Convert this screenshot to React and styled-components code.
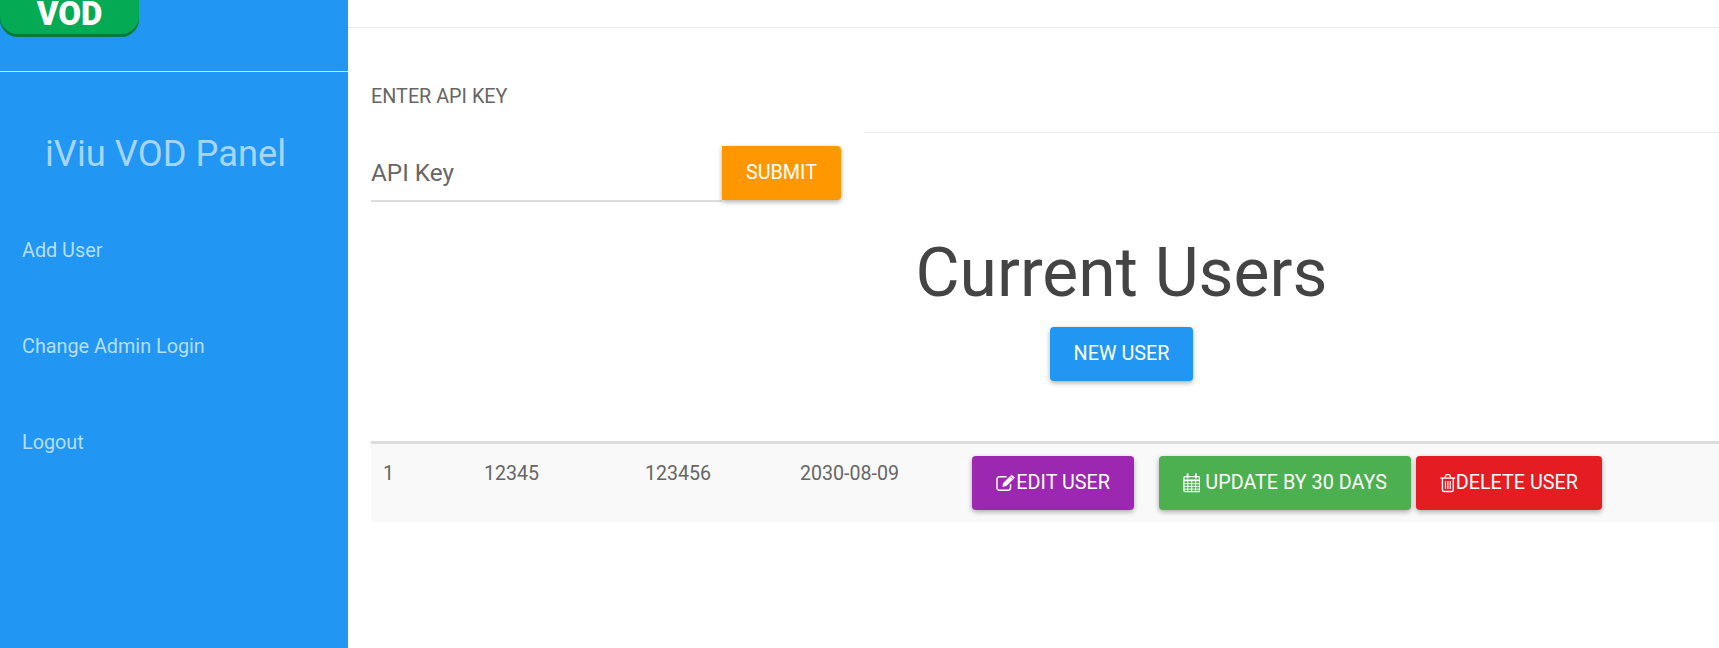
import styled, { createGlobalStyle } from 'styled-components';

const users = [{ id: 1, username: '12345', password: '123456', expires: '2030-08-09' }];
const links = ['Add User', 'Change Admin Login', 'Logout'];

// font-awesome 4 outline glyphs, the icon packages only carry the heavier v5 ones
const EditIcon = () => (
  <svg width="21" height="18" viewBox="0 0 21 18" fill="none" stroke="currentColor">
    <path d="M11 2.5H3.5a2.5 2.5 0 0 0-2.5 2.5v9a2.5 2.5 0 0 0 2.5 2.5h9a2.5 2.5 0 0 0 2.5-2.5v-4" strokeWidth="1.5" />
    <path d="M7 12.5l.8-3.6 8.4-8.2 2.9 2.9-8.4 8.2z" fill="currentColor" strokeWidth="0.6" />
    <path d="M14.8 2.4l2.8 2.8" stroke="#9c27b0" strokeWidth="0.8" />
  </svg>
);

const CalendarIcon = () => (
  <svg width="20" height="22" viewBox="0 0 19 21" fill="none" stroke="currentColor" strokeWidth="1.2">
    <rect x="1" y="3.5" width="17" height="16.5" rx="1.2" strokeWidth="1.4" />
    <path d="M1 7.6h17" strokeWidth="2" />
    <path d="M1 11.2h17M1 14.2h17M1 17.2h17M5.2 8v12M9.5 8v12M13.8 8v12" strokeWidth="1" />
    <path d="M5 .8v4M14 .8v4" strokeWidth="2" strokeLinecap="round" />
  </svg>
);

const TrashIcon = () => (
  <svg width="17" height="20" viewBox="0 0 16 19" fill="none" stroke="currentColor">
    <path d="M.5 4.5h15" strokeWidth="1.4" />
    <path d="M5 4.2l1-2.6a1 1 0 0 1 1-.6h2a1 1 0 0 1 1 .6l1 2.6" strokeWidth="1.3" />
    <path d="M2.5 4.5v12a1.7 1.7 0 0 0 1.7 1.7h7.6a1.7 1.7 0 0 0 1.7-1.7v-12" strokeWidth="1.4" />
    <path d="M5.6 7.5v8M8 7.5v8M10.4 7.5v8" strokeWidth="1.2" />
  </svg>
);

function App() {
  return (
    <>
      <GlobalStyle />
      <Page>
        <Sidebar>
          <LogoArea>
            <VodBadge>VOD</VodBadge>
          </LogoArea>
          <PanelTitle>iViu VOD Panel</PanelTitle>
          <Nav>
            {links.map((link) => (
              <NavLink key={link} href="#">
                {link}
              </NavLink>
            ))}
          </Nav>
        </Sidebar>

        <Main>
          <TopBar />
          <Content>
            <KeySection>
              <KeyColumn>
                <KeyLabel>ENTER API KEY</KeyLabel>
                <KeyForm>
                  <KeyInput placeholder="API Key" />
                  <SubmitButton>SUBMIT</SubmitButton>
                </KeyForm>
              </KeyColumn>
              <Divider />
            </KeySection>
            <UsersHeader>
              <Heading>Current Users</Heading>
              <Button $color="#2196f3">NEW USER</Button>
            </UsersHeader>
            <UserTable>
              {users.map((user) => (
                <UserRow key={user.id}>
                  <IdCell>{user.id}</IdCell>
                  <NameCell>{user.username}</NameCell>
                  <PassCell>{user.password}</PassCell>
                  <DateCell>{user.expires}</DateCell>
                  <Actions>
                    <Button $color="#9c27b0" $width={162}>
                      <EditIcon />
                      EDIT USER
                    </Button>
                    <UpdateButton $color="#4caf50" $width={252}>
                      <CalendarIcon />
                      &nbsp;UPDATE BY 30 DAYS
                    </UpdateButton>
                    <Button $color="#e61c23" $width={186}>
                      <TrashIcon />
                      DELETE USER
                    </Button>
                  </Actions>
                </UserRow>
              ))}
            </UserTable>
          </Content>
        </Main>
      </Page>
    </>
  );
}

const GlobalStyle = createGlobalStyle`
  html, body {
    margin: 0;
    height: 100%;
    overflow: hidden;
  }

  body {
    font-family: Roboto, "Liberation Sans", sans-serif;
    background-color: #fff;
    color: #666;
  }
`;

const Page = styled.div`
  display: flex;
  width: 1719px;
  height: 648px;
  overflow: hidden;
`;

const Sidebar = styled.aside`
  flex: 0 0 348px;
  background-color: #2196f3;
`;

const LogoArea = styled.div`
  height: 71px;
  border-bottom: 1px solid rgba(255, 255, 255, 0.75);
`;

const VodBadge = styled.div`
  display: flex;
  justify-content: center;
  align-items: flex-end;
  width: 139px;
  height: 36.5px;
  box-sizing: border-box;
  padding-bottom: 7px;
  border-radius: 0 0 18px 18px;
  background-color: #04aa54;
  box-shadow: inset 0 -3px 0 #067a3e;
  color: #fff;
  font-size: 33px;
  font-weight: 900;
  line-height: 33px;
`;

const PanelTitle = styled.h2`
  margin: 60px 0 0;
  padding-left: 45px;
  color: #a6d5fa;
  font-size: 36.3px;
  font-weight: 400;
  line-height: 44px;
`;

const Nav = styled.nav`
  display: flex;
  flex-direction: column;
  gap: 72px;
  margin-top: 63px;
  padding-left: 22px;
`;

const NavLink = styled.a`
  color: #b7defb;
  font-size: 19.8px;
  line-height: 24px;
  text-decoration: none;
`;

const Main = styled.main`
  flex: 1;
  min-width: 0;
`;

const TopBar = styled.div`
  height: 27px;
  border-bottom: 1px solid #eee;
`;

const Content = styled.div`
  padding: 57px 0 0 23px;
`;

const KeySection = styled.div`
  display: flex;
  align-items: flex-start;
  gap: 23px;
`;

const KeyColumn = styled.div`
  flex: 0 0 470px;
`;

const KeyLabel = styled.div`
  font-size: 19.8px;
  line-height: 24px;
`;

const KeyForm = styled.div`
  display: flex;
  align-items: flex-start;
  margin-top: 37px;
`;

const KeyInput = styled.input`
  flex: 1;
  min-width: 0;
  height: 56px;
  box-sizing: border-box;
  padding: 0 0 2px;
  border: none;
  border-bottom: 2px solid #ddd;
  outline: none;
  background: none;
  font-family: inherit;
  font-size: 24.3px;
  color: #666;

  &::placeholder {
    color: #666;
    opacity: 1;
  }
`;

const Button = styled.button`
  display: inline-flex;
  justify-content: center;
  align-items: center;
  height: 54px;
  width: ${(props) => (props.$width ? `${props.$width}px` : 'auto')};
  padding: 0 24px 1px;
  border: none;
  border-radius: 4px;
  background-color: ${(props) => props.$color};
  box-shadow: 0 2px 5px rgba(0, 0, 0, 0.32);
  color: #fff;
  font-family: inherit;
  font-size: 19.8px;
  white-space: nowrap;
`;

const SubmitButton = styled(Button)`
  width: 119px;
  padding: 0 0 1px;
  border-radius: 0 4px 4px 0;
  background-color: #ff9800;
`;

const UpdateButton = styled(Button)`
  margin-left: 25px;
  margin-right: 5px;
`;

const Divider = styled.div`
  flex: 1;
  margin-top: 47px;
  border-top: 1px solid #eee;
`;

const UsersHeader = styled.div`
  display: flex;
  flex-direction: column;
  align-items: center;
  gap: 12px;
  padding: 29px 0 0 153px;
`;

const Heading = styled.h1`
  margin: 0;
  color: #444;
  font-size: 67.8px;
  font-weight: 400;
  line-height: 84px;
`;

const UserTable = styled.div`
  margin-top: 60px;
  border-top: 3px solid #ddd;
`;

const UserRow = styled.div`
  display: flex;
  height: 78px;
  background-color: #f9f9f9;
  font-size: 19.6px;
`;

const Cell = styled.div`
  padding-top: 18px;
  line-height: 24px;
`;

const IdCell = styled(Cell)`
  flex: 0 0 113px;
  padding-left: 12px;
  box-sizing: border-box;
`;

const NameCell = styled(Cell)`
  flex: 0 0 161px;
`;

const PassCell = styled(Cell)`
  flex: 0 0 155px;
`;

const DateCell = styled(Cell)`
  flex: 0 0 172px;
`;

const Actions = styled.div`
  display: flex;
  padding-top: 12px;
`;

export default App;
